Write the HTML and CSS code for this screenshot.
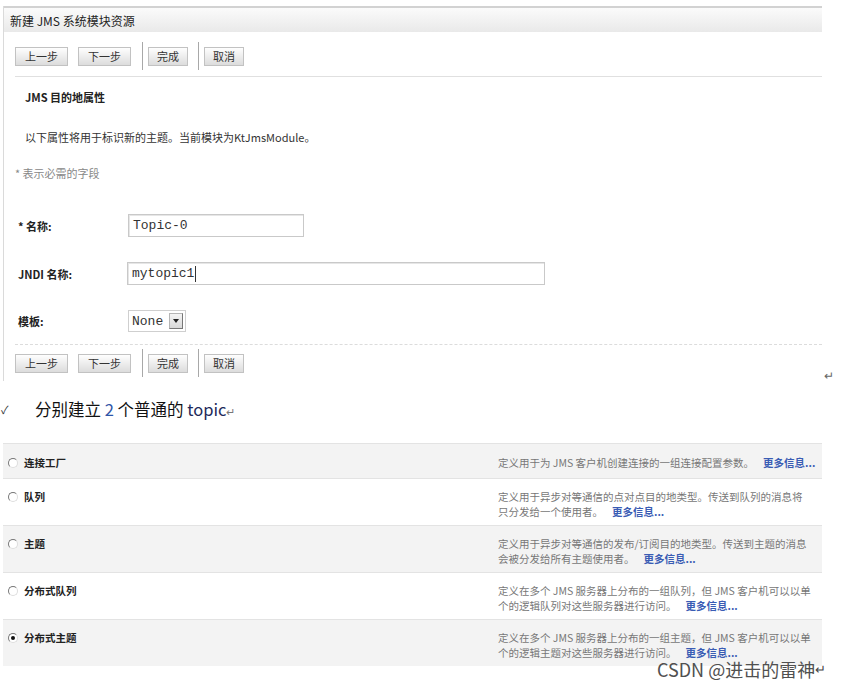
FILE: index.html
```html
<!DOCTYPE html>
<html lang="zh">
<head>
<meta charset="utf-8">
<title>新建 JMS 系统模块资源</title>
<link rel="stylesheet" href="styles.css">
</head>
<body>
<div class="page">
  <div class="top">
    <div class="panel">
      <div class="header">新建 JMS 系统模块资源</div>
      <div class="body">
        <div class="toolbar">
          <span class="btn w3">上一步</span>
          <span class="btn w3 gap">下一步</span>
          <span class="sep"></span>
          <span class="btn w2">完成</span>
          <span class="sep sep2"></span>
          <span class="btn w2">取消</span>
        </div>
        <div class="rule"></div>
        <div class="title">JMS 目的地属性</div>
        <div class="intro">以下属性将用于标识新的主题。当前模块为KtJmsModule。</div>
        <div class="required">* 表示必需的字段</div>
        <div class="form">
          <div class="frow">
            <span class="label">* 名称:</span>
            <span class="field name">Topic-0</span>
          </div>
          <div class="frow">
            <span class="label">JNDI 名称:</span>
            <span class="field jndi">mytopic1<span class="caret"></span></span>
          </div>
          <div class="frow">
            <span class="label">模板:</span>
            <span class="select"><span class="sel-text">None</span><span class="sel-btn"><span class="tri"></span></span></span>
          </div>
        </div>
        <div class="rule dashed"></div>
        <div class="toolbar tb2">
          <span class="btn w3">上一步</span>
          <span class="btn w3 gap">下一步</span>
          <span class="sep"></span>
          <span class="btn w2">完成</span>
          <span class="sep sep2"></span>
          <span class="btn w2">取消</span>
        </div>
      </div>
    </div>
    <span class="ret">↵</span>
  </div>

  <div class="note"><span class="check">✓</span><span class="note-text">分别建立 <span class="num">2</span> 个普通的 <span class="kw">topic</span><span class="ret-s">↵</span></span></div>

  <div class="table">
    <div class="row alt single">
      <div class="opt"><span class="radio"></span>连接工厂</div>
      <div class="desc">定义用于为 JMS 客户机创建连接的一组连接配置参数。<span class="more">更多信息...</span></div>
    </div>
    <div class="row">
      <div class="opt"><span class="radio"></span>队列</div>
      <div class="desc">定义用于异步对等通信的点对点目的地类型。传送到队列的消息将<br>只分发给一个使用者。<span class="more">更多信息...</span></div>
    </div>
    <div class="row alt">
      <div class="opt"><span class="radio"></span>主题</div>
      <div class="desc">定义用于异步对等通信的发布/订阅目的地类型。传送到主题的消息<br>会被分发给所有主题使用者。<span class="more">更多信息...</span></div>
    </div>
    <div class="row">
      <div class="opt"><span class="radio"></span>分布式队列</div>
      <div class="desc">定义在多个 JMS 服务器上分布的一组队列，但 JMS 客户机可以以单<br>个的逻辑队列对这些服务器进行访问。<span class="more">更多信息...</span></div>
    </div>
    <div class="row alt">
      <div class="opt"><span class="radio on"></span>分布式主题</div>
      <div class="desc">定义在多个 JMS 服务器上分布的一组主题，但 JMS 客户机可以以单<br>个的逻辑主题对这些服务器进行访问。<span class="more">更多信息...</span></div>
    </div>
  </div>

  <div class="wm">CSDN @进击的雷神<span class="wm-ret">↵</span></div>
</div>
</body>
</html>
```

FILE: styles.css
```css
* { box-sizing: border-box; }

body {
  margin: 0;
  background: #fff;
  color: #333;
  font-family: "Noto Sans CJK SC", "Liberation Sans", sans-serif;
  font-size: 11px;
}

.page {
  position: relative;
  width: 842px;
  height: 688px;
  overflow: hidden;
}

.top {
  display: flex;
  align-items: flex-end;
  padding-top: 6px;
}

.panel {
  margin-left: 3px;
  width: 819px;
  border-left: 1px solid #dadada;
  padding-bottom: 4px;
}

.header {
  height: 26px;
  border-top: 2px solid #d2d2d2;
  background: linear-gradient(#fbfbfb, #e9e9e9);
  padding-left: 6px;
  display: flex;
  align-items: center;
  font-size: 12px;
  color: #222;
}

.body {
  padding-left: 11px;
}

.toolbar {
  display: flex;
  align-items: center;
  height: 28px;
  margin-top: 10px;
}

.tb2 {
  margin-top: 4px;
}

.btn {
  height: 19px;
  border: 1px solid #c2c2c2;
  background: linear-gradient(#fefefe, #dcdcdc);
  display: flex;
  align-items: center;
  justify-content: center;
  font-size: 11px;
  color: #333;
  line-height: 1;
}

.w3 { width: 53px; }
.w2 { width: 40px; }
.gap { margin-left: 10px; }

.sep {
  width: 1px;
  align-self: stretch;
  background: #a8a8a8;
  margin: 0 5px 0 11px;
}

.sep2 { margin-left: 10px; }

.rule {
  height: 1px;
  background: #e0e0e0;
  margin-top: 6px;
}

.rule.dashed {
  background: none;
  border-top: 1px dashed #dcdcdc;
  margin-top: 12px;
}

.title {
  margin-top: 12px;
  padding-left: 10px;
  line-height: 16px;
  font-weight: bold;
  color: #222;
}

.intro {
  margin-top: 24px;
  padding-left: 10px;
  line-height: 16px;
}

.required {
  margin-top: 20px;
  line-height: 16px;
  color: #888;
}

.form {
  margin-top: 33px;
}

.frow {
  display: grid;
  grid-template-columns: 110px auto;
  align-items: center;
  padding-left: 3px;
}

.frow + .frow {
  margin-top: 25px;
}

.label {
  font-weight: bold;
  color: #222;
}

.field {
  height: 23px;
  border: 1px solid #c9c9c9;
  box-shadow: inset 1px 1px 0 #e6e6e6;
  padding-left: 4px;
  display: flex;
  align-items: center;
  font-family: "Liberation Mono", monospace;
  font-size: 13px;
  color: #333;
}

.name { width: 176px; }
.jndi { width: 418px; margin-left: -1px; }

.caret {
  width: 1px;
  height: 16px;
  background: #333;
  margin-left: 1px;
}

.select {
  width: 58px;
  height: 22px;
  border: 1px solid #cfcfcf;
  display: flex;
  align-items: center;
  justify-content: space-between;
  padding: 0 2px 0 3px;
}

.sel-text {
  font-family: "Liberation Mono", monospace;
  font-size: 13px;
  color: #333;
}

.sel-btn {
  width: 14px;
  height: 16px;
  border: 1px solid #b5b5b5;
  border-right-color: #777;
  border-bottom-color: #777;
  background: linear-gradient(#f4f4f4, #d8d8d8);
  display: flex;
  align-items: center;
  justify-content: center;
}

.tri {
  width: 0;
  height: 0;
  border-left: 3px solid transparent;
  border-right: 3px solid transparent;
  border-top: 4px solid #222;
}

.ret {
  font-size: 12px;
  line-height: 12px;
  color: #666;
  margin-left: 2px;
}

.note {
  margin-top: 16px;
  display: flex;
  align-items: center;
  height: 24px;
}

.check {
  width: 35px;
  padding-left: 1px;
  font-size: 11px;
  color: #333;
}

.note-text {
  font-size: 16.5px;
  color: #111;
}

.num { color: #2f55a8; }
.kw { color: #1e2a5a; }

.ret-s {
  font-size: 11px;
  color: #777;
}

.table {
  margin-top: 22px;
  margin-left: 3px;
  width: 819px;
}

.row {
  display: grid;
  grid-template-columns: 1fr 324px;
  border-top: 1px solid #e3e3e3;
  padding: 10px 0 6px;
}

.row.single {
  padding: 11px 0 8px;
}

.row.alt {
  background: #f3f3f3;
}

.opt {
  display: flex;
  align-items: center;
  padding-left: 5px;
  font-weight: bold;
  font-size: 10.5px;
  line-height: 15px;
  height: 15px;
  color: #222;
}

.radio {
  width: 10px;
  height: 10px;
  border-radius: 50%;
  border: 1px solid #777;
  border-right-color: #ddd;
  border-bottom-color: #ddd;
  background: #fff;
  margin-right: 6px;
  display: flex;
  align-items: center;
  justify-content: center;
}

.radio.on::after {
  content: "";
  width: 4px;
  height: 4px;
  border-radius: 50%;
  background: #111;
}

.desc {
  font-size: 10.5px;
  line-height: 15px;
  color: #777;
}

.more {
  color: #3a5cb4;
  font-weight: bold;
  margin-left: 9px;
}

.wm {
  position: absolute;
  left: 657px;
  top: 662px;
  font-size: 18px;
  line-height: 14px;
  color: #505050;
}

.wm-ret {
  font-size: 13px;
  color: #444;
  vertical-align: top;
}
```
